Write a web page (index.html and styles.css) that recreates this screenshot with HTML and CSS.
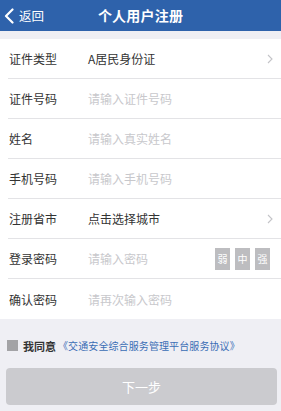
FILE: index.html
```html
<!DOCTYPE html>
<html lang="zh">
<head>
<meta charset="utf-8">
<link rel="stylesheet" href="styles.css">
</head>
<body>
<div class="page">
  <header class="topbar">
    <div class="back">
      <svg class="back-icon" width="10" height="16" viewBox="0 0 10 16"><path d="M8.5 1.5 L2 8 L8.5 14.5" fill="none" stroke="#fff" stroke-width="2.2" stroke-linecap="round" stroke-linejoin="round"/></svg>
      <span>返回</span>
    </div>
    <div class="title">个人用户注册</div>
  </header>

  <div class="form">
    <div class="row">
      <span class="label">证件类型</span>
      <span class="value">A居民身份证</span>
      <svg class="chev" width="6" height="10" viewBox="0 0 6 10"><path d="M1 1 L5 5 L1 9" fill="none" stroke="#c4c4c8" stroke-width="1.1"/></svg>
    </div>
    <div class="row">
      <span class="label">证件号码</span>
      <span class="value ph">请输入证件号码</span>
    </div>
    <div class="row">
      <span class="label">姓名</span>
      <span class="value ph">请输入真实姓名</span>
    </div>
    <div class="row">
      <span class="label">手机号码</span>
      <span class="value ph">请输入手机号码</span>
    </div>
    <div class="row">
      <span class="label">注册省市</span>
      <span class="value">点击选择城市</span>
      <svg class="chev" width="6" height="10" viewBox="0 0 6 10"><path d="M1 1 L5 5 L1 9" fill="none" stroke="#c4c4c8" stroke-width="1.1"/></svg>
    </div>
    <div class="row">
      <span class="label">登录密码</span>
      <span class="value ph">请输入密码</span>
      <div class="strength">
        <span class="lvl">弱</span>
        <span class="lvl">中</span>
        <span class="lvl">强</span>
      </div>
    </div>
    <div class="row last">
      <span class="label">确认密码</span>
      <span class="value ph">请再次输入密码</span>
    </div>
  </div>

  <div class="agree">
    <span class="box"></span>
    <span class="agree-text">我同意</span>
    <span class="link">《交通安全综合服务管理平台服务协议》</span>
  </div>

  <div class="btn-wrap">
    <button class="next">下一步</button>
  </div>
</div>
</body>
</html>
```
FILE: styles.css
```css
* { box-sizing: border-box; }
html, body { margin: 0; padding: 0; }
body {
  background: #efeff4;
  font-family: "Noto Sans CJK SC", "Noto Sans", sans-serif;
  width: 281px;
  height: 411px;
  overflow: hidden;
}
.page { display: flex; flex-direction: column; }
.topbar {
  height: 31px;
  background: #2e62ab;
  position: relative;
  display: flex;
  align-items: center;
  color: #fff;
}
.back {
  display: flex;
  align-items: center;
  padding-left: 4px;
  gap: 5px;
  font-size: 12.5px;
}
.title {
  position: absolute;
  left: 0; right: 0;
  text-align: center;
  font-size: 14px;
  font-weight: 700;
  letter-spacing: 0.2px;
  top: 0; bottom: 0;
  line-height: 31px;
  pointer-events: none;
}
.form {
  margin-top: 8px;
  background: #fff;
  padding-left: 8px;
}
.row {
  height: 40px;
  display: flex;
  align-items: center;
  border-bottom: 1px solid #e3e3e6;
  padding-right: 8px;
}
.row.last { border-bottom: none; }
.label {
  width: 80px;
  flex: none;
  font-size: 12px;
  color: #333;
  padding-left: 1px;
}
.value {
  flex: 1;
  font-size: 12px;
  color: #333;
}
.value.ph { color: #c8c8cc; }
.chev { flex: none; margin-right: 0; }
.strength { display: flex; gap: 5px; margin-right: 3px; }
.lvl {
  width: 15px;
  height: 22px;
  background: #bdbdc0;
  color: #fff;
  font-size: 10px;
  display: flex;
  align-items: center;
  justify-content: center;
}
.agree {
  display: flex;
  align-items: center;
  padding-left: 7px;
  margin-top: 20px;
  height: 13px;
}
.box {
  width: 11px;
  height: 11px;
  background: #a3a3a6;
  margin-right: 5px;
}
.agree-text {
  font-size: 11px;
  font-weight: 700;
  color: #333;
  margin-right: 2px;
}
.link {
  font-size: 10px;
  color: #3a6db5;
  letter-spacing: 0.1px;
}
.btn-wrap { padding: 0 4px 0 6px; margin-top: 16px; }
.next {
  width: 100%;
  height: 37px;
  border: none;
  border-radius: 4px;
  background: #cbcbcf;
  color: #fff;
  font-family: "Noto Sans CJK SC", sans-serif;
  font-size: 13px;
  padding: 0;
}
```
